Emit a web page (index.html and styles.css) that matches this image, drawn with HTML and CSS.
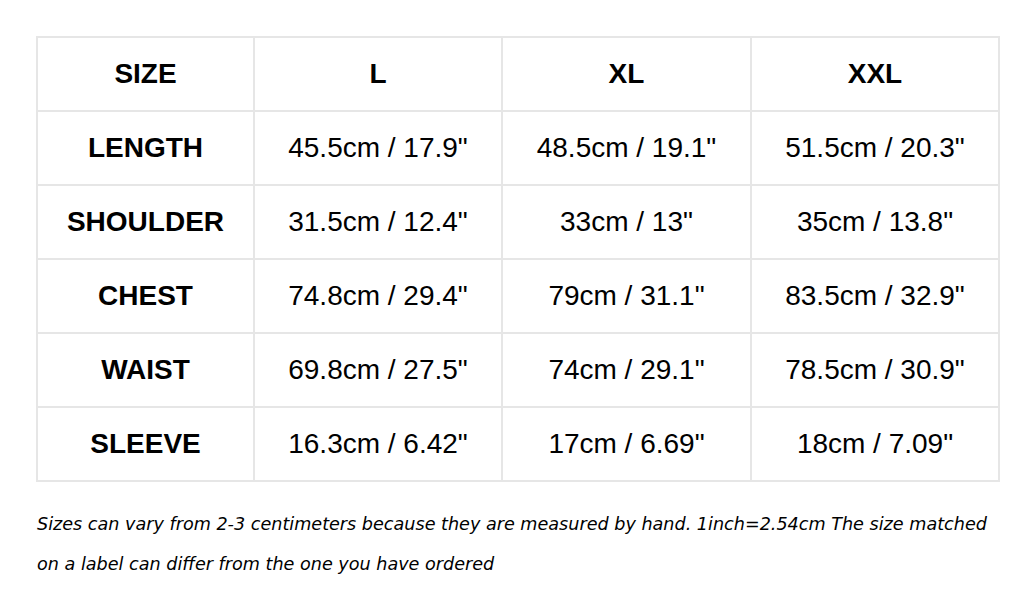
FILE: index.html
```html
<!DOCTYPE html>
<html>
<head>
<meta charset="utf-8">
<link rel="stylesheet" href="styles.css">
</head>
<body>
<div class="page">
<table class="chart">
<colgroup><col class="c1"><col class="c2"><col class="c3"><col class="c4"></colgroup>
<tr><th>SIZE</th><th>L</th><th>XL</th><th>XXL</th></tr>
<tr><th>LENGTH</th><td>45.5cm / 17.9"</td><td>48.5cm / 19.1"</td><td>51.5cm / 20.3"</td></tr>
<tr><th>SHOULDER</th><td>31.5cm / 12.4"</td><td>33cm / 13"</td><td>35cm / 13.8"</td></tr>
<tr><th>CHEST</th><td>74.8cm / 29.4"</td><td>79cm / 31.1"</td><td>83.5cm / 32.9"</td></tr>
<tr><th>WAIST</th><td>69.8cm / 27.5"</td><td>74cm / 29.1"</td><td>78.5cm / 30.9"</td></tr>
<tr><th>SLEEVE</th><td>16.3cm / 6.42"</td><td>17cm / 6.69"</td><td>18cm / 7.09"</td></tr>
</table>
<p class="note">Sizes can vary from 2-3 centimeters because they are measured by hand. 1inch=2.54cm The size matched on a label can differ from the one you have ordered</p>
</div>
</body>
</html>
```
FILE: styles.css
```css
html, body { margin: 0; padding: 0; background: #fff; }
.page { padding: 36px 35px 0 36px; }
.chart {
  border-collapse: collapse;
  width: 964px;
  table-layout: fixed;
  font-family: "Liberation Sans", Arial, sans-serif;
  font-size: 28px;
  color: #000;
}
.c1 { width: 217px; }
.c2 { width: 248px; }
.c3 { width: 249px; }
.c4 { width: 248px; }
.chart th, .chart td {
  border: 2px solid #e6e6e6;
  height: 74px;
  padding: 0;
  text-align: center;
  vertical-align: middle;
  box-sizing: border-box;
}
.chart th { font-weight: bold; }
.chart td { font-weight: normal; }
.note {
  margin: 22px 0 0 1px;
  width: 960px;
  font-family: "DejaVu Sans", Verdana, sans-serif;
  font-style: italic;
  font-size: 17.6px;
  line-height: 40px;
  color: #000;
}
```
